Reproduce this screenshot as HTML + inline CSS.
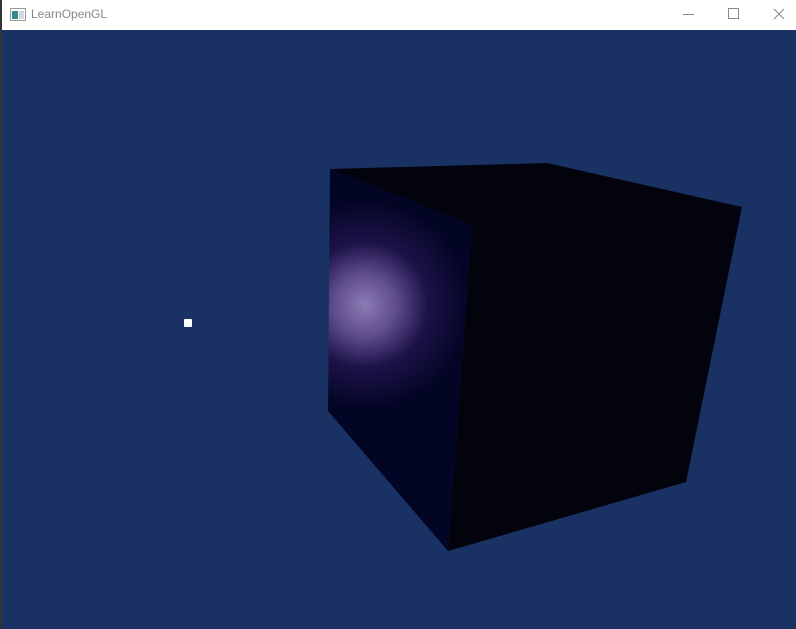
<!DOCTYPE html><html><head><style>
body{margin:0;width:796px;height:629px;overflow:hidden;background:#1a3263;font-family:"Liberation Sans",sans-serif;position:relative}
.tb{position:absolute;left:0;top:0;width:796px;height:30px;background:#fff}
.t{position:absolute;left:31px;top:7px;font-size:12px;color:#888}
.lb{position:absolute;left:0;top:0;width:2px;height:629px;background:#333}
</style></head><body>
<div class="tb">
<svg width="796" height="30" style="position:absolute;left:0;top:0">
<rect x="10.5" y="8.5" width="15" height="12" fill="#fff" stroke="#999"/>
<rect x="12" y="11" width="6" height="8" fill="#3a8a8a"/><rect x="19" y="11" width="5" height="8" fill="#d0d8e0"/>
<line x1="683" y1="14.5" x2="694" y2="14.5" stroke="#888"/>
<rect x="728.5" y="8.5" width="10" height="10" fill="none" stroke="#888"/>
<path d="M774 9 L784 19 M784 9 L774 19" stroke="#888"/>
</svg>
<div class="t">LearnOpenGL</div></div>
<div class="lb"></div>
<svg width="796" height="599" style="position:absolute;left:0;top:30px">
<defs><radialGradient id="g" cx="365" cy="275" r="105" gradientUnits="userSpaceOnUse">
<stop offset="0" stop-color="#8c7cb4"/><stop offset="0.3" stop-color="#5e4c8c"/><stop offset="0.6" stop-color="#1c1248"/><stop offset="1" stop-color="#030524"/></radialGradient></defs>
<polygon points="330,139 547,133 742,177 472,195" fill="#02030c"/>
<polygon points="472,195 742,177 686,452 448,521" fill="#02030c"/>
<polygon points="330,139 472,195 448,521 328,381" fill="url(#g)"/>
<rect x="184" y="289" width="8" height="8" rx="1" fill="#fff"/>
</svg>
</body></html>
